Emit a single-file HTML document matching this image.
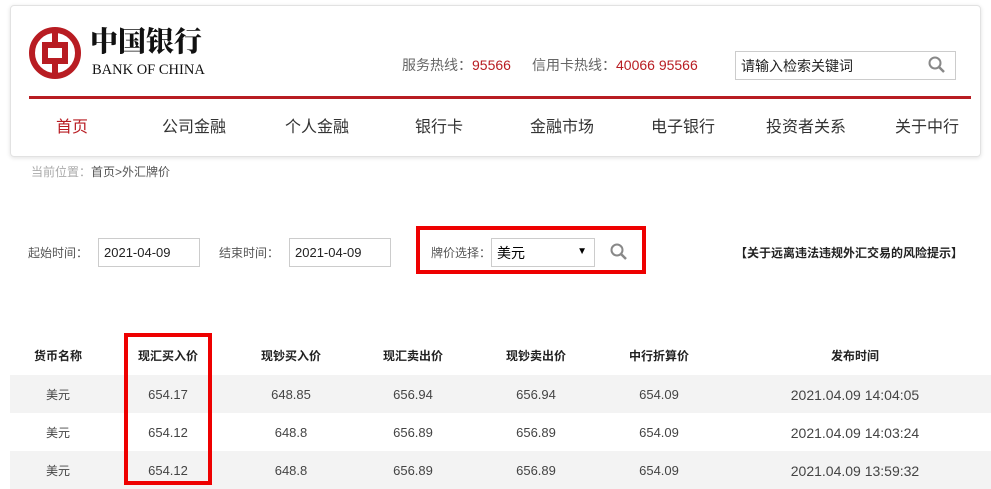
<!DOCTYPE html>
<html><head><meta charset="utf-8"><style>
*{margin:0;padding:0;box-sizing:border-box}
body{width:991px;height:489px;background:#fff;font-family:"Liberation Sans","Noto Sans CJK SC",sans-serif;position:relative;overflow:hidden;color:#333}
.a{position:absolute;white-space:nowrap;line-height:1.2}
.card{position:absolute;left:10px;top:5px;width:971px;height:152px;border:1px solid #e2e2e2;border-radius:4px;box-shadow:0 1px 4px rgba(0,0,0,.12)}
.nav{font-size:16px;color:#333;top:118px}
.inp{position:absolute;border:1px solid #ccc;height:29px;font-size:13px;padding:6px 0 0 5px;color:#222;line-height:1.2}
.lab{font-size:12px;color:#555}
.th{font-size:12px;font-weight:bold;color:#222;top:349px;transform:translateX(-50%)}
.row{position:absolute;left:10px;width:981px;height:38px}
.c{font-size:13px;color:#444;transform:translateX(-50%);line-height:16px;height:16px}
.red{position:absolute;border:4px solid #e00}
</style></head><body>
<div class="card"></div>
<svg class="a" style="left:28px;top:26px" width="54" height="54" viewBox="0 0 54 54">
<circle cx="27" cy="27" r="23" fill="none" stroke="#b81c22" stroke-width="6"/>
<rect x="17" y="19" width="20" height="16" fill="none" stroke="#b81c22" stroke-width="6"/>
<rect x="24" y="3" width="6" height="48" fill="#b81c22"/>
<rect x="21" y="22" width="12" height="10" fill="#fff"/>
</svg>
<div class="a" style="left:90px;top:24px;font-size:28px;font-family:'Noto Serif CJK SC',serif;font-weight:900;color:#111">中国银行</div>
<div class="a" style="left:92px;top:62px;font-size:14.5px;font-family:'Liberation Serif',serif;color:#111">BANK OF CHINA</div>
<div class="a" style="left:402px;top:57px;font-size:14px;color:#666">服务热线：<span style="color:#b81c22">95566</span></div>
<div class="a" style="left:532px;top:57px;font-size:14px;color:#666">信用卡热线：<span style="color:#b81c22">40066 95566</span></div>
<div class="a" style="left:735px;top:51px;width:221px;height:29px;border:1px solid #ccc;font-size:14px;padding:6px 0 0 5px;color:#222">请输入检索关键词</div>
<svg class="a" style="left:928px;top:56px" width="18" height="18" viewBox="0 0 18 18"><circle cx="7" cy="7" r="5.5" fill="none" stroke="#888" stroke-width="2"/><line x1="11" y1="11" x2="16" y2="16" stroke="#888" stroke-width="2.5"/></svg>
<div class="a" style="left:29px;top:96px;width:942px;height:3px;background:#b81c22"></div>
<div class="a nav" style="left:56px;color:#b81c22">首页</div>
<div class="a nav" style="left:162px">公司金融</div>
<div class="a nav" style="left:285px">个人金融</div>
<div class="a nav" style="left:415px">银行卡</div>
<div class="a nav" style="left:530px">金融市场</div>
<div class="a nav" style="left:651px">电子银行</div>
<div class="a nav" style="left:766px">投资者关系</div>
<div class="a nav" style="left:895px">关于中行</div>
<div class="a" style="left:31px;top:165px;font-size:12px;color:#aaa">当前位置：<span style="color:#555">首页&gt;外汇牌价</span></div>
<div class="a lab" style="left:28px;top:246px">起始时间：</div>
<div class="inp" style="left:98px;top:238px;width:102px">2021-04-09</div>
<div class="a lab" style="left:219px;top:246px">结束时间：</div>
<div class="inp" style="left:289px;top:238px;width:102px">2021-04-09</div>
<div class="a lab" style="left:431px;top:246px">牌价选择：</div>
<div class="inp" style="left:491px;top:238px;width:104px;font-size:14px;color:#000">美元<span style="position:absolute;right:7px;top:7px;font-size:10px">▼</span></div>
<svg class="a" style="left:610px;top:243px" width="18" height="18" viewBox="0 0 18 18"><circle cx="7" cy="7" r="5.5" fill="none" stroke="#888" stroke-width="2"/><line x1="11" y1="11" x2="16" y2="16" stroke="#888" stroke-width="2.5"/></svg>
<div class="red" style="left:416px;top:226px;width:230px;height:48px"></div>
<div class="a" style="left:735px;top:246px;font-size:12px;font-weight:bold;color:#222">【关于远离违法违规外汇交易的风险提示】</div>
<div class="a th" style="left:58px">货币名称</div>
<div class="a th" style="left:168px">现汇买入价</div>
<div class="a th" style="left:291px">现钞买入价</div>
<div class="a th" style="left:413px">现汇卖出价</div>
<div class="a th" style="left:536px">现钞卖出价</div>
<div class="a th" style="left:659px">中行折算价</div>
<div class="a th" style="left:855px">发布时间</div>
<div class="row" style="top:375px;background:#f3f3f3"></div>
<div class="row" style="top:451px;background:#f3f3f3"></div>
<div class="a c" style="left:58px;top:387px;font-size:12px">美元</div><div class="a c" style="left:168px;top:387px">654.17</div><div class="a c" style="left:291px;top:387px">648.85</div><div class="a c" style="left:413px;top:387px">656.94</div><div class="a c" style="left:536px;top:387px">656.94</div><div class="a c" style="left:659px;top:387px">654.09</div><div class="a c" style="left:855px;top:387px;font-size:14px">2021.04.09 14:04:05</div>
<div class="a c" style="left:58px;top:425px;font-size:12px">美元</div><div class="a c" style="left:168px;top:425px">654.12</div><div class="a c" style="left:291px;top:425px">648.8</div><div class="a c" style="left:413px;top:425px">656.89</div><div class="a c" style="left:536px;top:425px">656.89</div><div class="a c" style="left:659px;top:425px">654.09</div><div class="a c" style="left:855px;top:425px;font-size:14px">2021.04.09 14:03:24</div>
<div class="a c" style="left:58px;top:463px;font-size:12px">美元</div><div class="a c" style="left:168px;top:463px">654.12</div><div class="a c" style="left:291px;top:463px">648.8</div><div class="a c" style="left:413px;top:463px">656.89</div><div class="a c" style="left:536px;top:463px">656.89</div><div class="a c" style="left:659px;top:463px">654.09</div><div class="a c" style="left:855px;top:463px;font-size:14px">2021.04.09 13:59:32</div>
<div class="red" style="left:124px;top:333px;width:88px;height:152px"></div>
</body></html>
